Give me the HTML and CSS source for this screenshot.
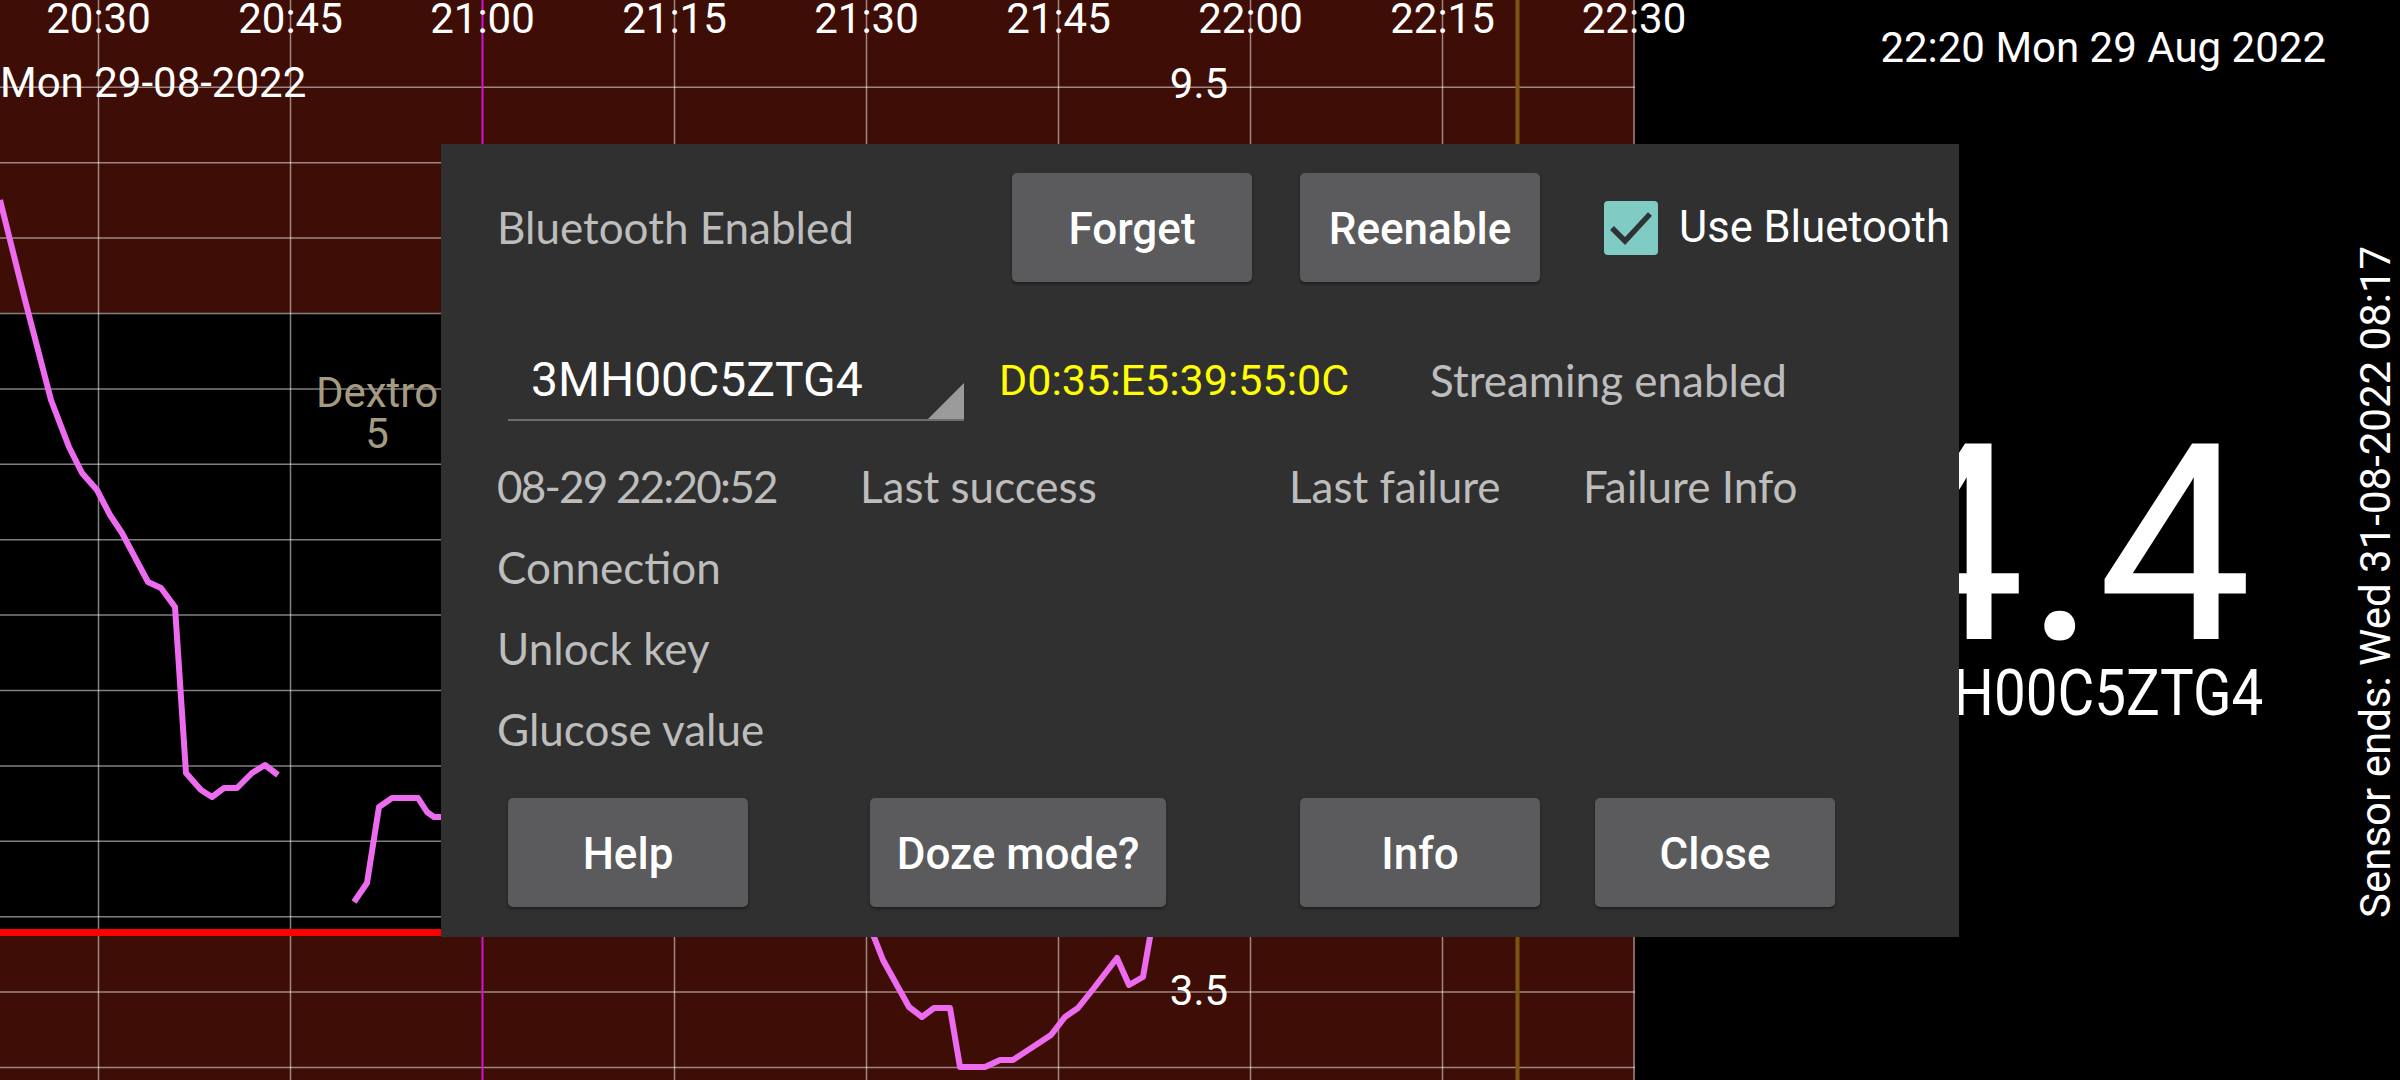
FILE: index.html
```html
<!DOCTYPE html>
<html lang="en">
<head>
<meta charset="utf-8">
<title>Sensor</title>
<link rel="stylesheet" href="styles.css">
</head>
<body>
<div class="screen">
  <svg class="chart" width="1635" height="1080" viewBox="0 0 1635 1080">
    <rect x="0" y="0" width="1635" height="1080" fill="#3e0d05"/>
    <rect x="0" y="313" width="1635" height="616" fill="#000"/>
    <g class="grid">
      <line x1="0" y1="87.3" x2="1635" y2="87.3"/>
      <line x1="0" y1="162.7" x2="1635" y2="162.7"/>
      <line x1="0" y1="238.1" x2="1635" y2="238.1"/>
      <line x1="0" y1="313.5" x2="1635" y2="313.5"/>
      <line x1="0" y1="388.9" x2="1635" y2="388.9"/>
      <line x1="0" y1="464.3" x2="1635" y2="464.3"/>
      <line x1="0" y1="539.7" x2="1635" y2="539.7"/>
      <line x1="0" y1="615.1" x2="1635" y2="615.1"/>
      <line x1="0" y1="690.5" x2="1635" y2="690.5"/>
      <line x1="0" y1="765.9" x2="1635" y2="765.9"/>
      <line x1="0" y1="841.3" x2="1635" y2="841.3"/>
      <line x1="0" y1="916.7" x2="1635" y2="916.7"/>
      <line x1="0" y1="992.1" x2="1635" y2="992.1"/>
      <line x1="0" y1="1067.5" x2="1635" y2="1067.5"/>
      <line x1="98.5" y1="0" x2="98.5" y2="1080"/>
      <line x1="290.5" y1="0" x2="290.5" y2="1080"/>
      <line x1="674.5" y1="0" x2="674.5" y2="1080"/>
      <line x1="866.5" y1="0" x2="866.5" y2="1080"/>
      <line x1="1058.5" y1="0" x2="1058.5" y2="1080"/>
      <line x1="1250.5" y1="0" x2="1250.5" y2="1080"/>
      <line x1="1442.5" y1="0" x2="1442.5" y2="1080"/>
      <line x1="1634" y1="0" x2="1634" y2="1080"/>
    </g>
    <line class="now-line" x1="482.5" y1="0" x2="482.5" y2="1080"/>
    <line class="end-line" x1="1517.5" y1="0" x2="1517.5" y2="1080"/>
    <rect x="0" y="929" width="1635" height="7" fill="#ff0000"/>
    <polyline class="trace" points="0,200 25,300 51,400 69,447 82,473 97,490 110,515 122,533 148,582 161,588 175,607 186,773 201,790 212,797 224,788 237,788 252,773 265,765 278,775"/>
    <polyline class="trace" points="354,902 367,883 379,807 392,798 418,798 427,812 434,817 460,817"/>
    <polyline class="trace" points="860,910 874,937 883,960 909,1007 922,1017 934,1008 950,1008 960,1067 985,1067 1000,1060 1013,1060 1051,1035 1065,1017 1078,1008 1094,988 1117,958 1129,985 1143,977 1150,937 1153,900"/>
    <g class="axis">
      <text x="98.5" y="33">20:30</text>
      <text x="290.5" y="33">20:45</text>
      <text x="482.5" y="33">21:00</text>
      <text x="674.5" y="33">21:15</text>
      <text x="866.5" y="33">21:30</text>
      <text x="1058.5" y="33">21:45</text>
      <text x="1250.5" y="33">22:00</text>
      <text x="1442.5" y="33">22:15</text>
      <text x="1634" y="33">22:30</text>
      <text x="1199" y="98">9.5</text>
      <text x="1199" y="1005">3.5</text>
    </g>
    <text class="day" x="0" y="97">Mon 29-08-2022</text>
    <g class="dextro">
      <text x="377" y="407">Dextro</text>
      <text x="377" y="448">5</text>
    </g>
  </svg>

  <div class="side">
    <div class="readout">
      <div class="clock">22:20 Mon 29 Aug 2022</div>
      <div class="value">4.4</div>
      <div class="serial">3MH00C5ZTG4</div>
    </div>
    <div class="sensor-col">
      <div class="sensor">Sensor ends: Wed 31-08-2022 08:17</div>
    </div>
  </div>

  <div class="dialog">
    <div class="row row-top">
      <span class="lbl lbl-state">Bluetooth Enabled</span>
      <button class="btn">Forget</button>
      <button class="btn btn-gap">Reenable</button>
      <label class="check">
        <span class="box">
          <svg width="54" height="54" viewBox="0 0 54 54"><polyline points="8,27 21,40 46,13" fill="none" stroke="#2e3434" stroke-width="5.5"/></svg>
        </span>
        <span class="check-text">Use Bluetooth</span>
      </label>
    </div>
    <div class="row row-sensor">
      <div class="spinner">
        <span class="spinner-text">3MH00C5ZTG4</span>
        <svg class="spinner-arrow" width="36" height="36" viewBox="0 0 36 36"><polygon points="0,36 36,36 36,0" fill="#9b9b9b"/></svg>
      </div>
      <span class="mac">D0:35:E5:39:55:0C</span>
      <span class="lbl">Streaming enabled</span>
    </div>
    <div class="row row-line">
      <span class="lbl col-time stamp">08-29 22:20:52</span>
      <span class="lbl col-success">Last success</span>
      <span class="lbl col-failure">Last failure</span>
      <span class="lbl">Failure Info</span>
    </div>
    <div class="row row-line"><span class="lbl col-time">Connection</span></div>
    <div class="row row-line"><span class="lbl col-time">Unlock key</span></div>
    <div class="row row-line"><span class="lbl col-time">Glucose value</span></div>
    <div class="row row-buttons">
      <button class="btn">Help</button>
      <button class="btn btn-doze">Doze mode?</button>
      <button class="btn btn-info">Info</button>
      <button class="btn btn-close">Close</button>
    </div>
  </div>
</div>
</body>
</html>
```

FILE: styles.css
```css
* { box-sizing: border-box; }

body {
  margin: 0;
  width: 2400px;
  height: 1080px;
  overflow: hidden;
  background: #000;
  font-family: Roboto, "Liberation Sans", sans-serif;
  color: #fff;
}

.screen {
  position: relative;
  display: flex;
  width: 2400px;
  height: 1080px;
}

/* chart */
.chart { flex: none; display: block; width: 1635px; height: 1080px; overflow: visible; }
.grid line { stroke: rgba(255, 255, 255, 0.5); stroke-width: 1.5; }
.now-line { stroke: #d412d4; stroke-width: 2; }
.end-line { stroke: #7d5410; stroke-width: 4; }
.trace { fill: none; stroke: #ec6bef; stroke-width: 6; stroke-linejoin: round; }
.axis text, .day {
  font-family: Roboto, "Liberation Sans", sans-serif;
  font-size: 42px;
  fill: #fff;
}
.axis text { text-anchor: middle; }
.dextro text {
  font-family: Roboto, "Liberation Sans", sans-serif;
  font-size: 42px;
  fill: #a59b82;
  text-anchor: middle;
}

/* right side readout */
.side { flex: 1; display: flex; }
.readout {
  flex: 1;
  display: flex;
  flex-direction: column;
  align-items: flex-end;
  white-space: nowrap;
}
.clock { margin-top: 23px; margin-right: 26px; font-size: 42px; line-height: 50px; }
.value { margin-top: 359px; margin-right: 100px; font-size: 275px; line-height: 226px; }
.serial {
  margin-right: 89px;
  font-size: 65px;
  line-height: 70px;
  transform: scaleX(0.87);
  transform-origin: right center;
}
.sensor-col { flex: none; width: 48px; display: flex; justify-content: center; }
.sensor {
  margin-top: 245px;
  height: 673px;
  writing-mode: vertical-rl;
  transform: rotate(180deg);
  font-size: 42px;
  line-height: 50px;
  white-space: nowrap;
}

/* dialog */
.dialog {
  position: absolute;
  left: 441px;
  top: 144px;
  width: 1518px;
  height: 793px;
  padding-top: 29px;
  background: #303030;
  display: flex;
  flex-direction: column;
}
.row { display: flex; align-items: center; flex: none; }
.row-top { height: 109px; padding-left: 56px; }
.row-sensor { height: 81px; margin-top: 58px; padding-left: 67px; align-items: stretch; }
.row-line { height: 81px; padding-left: 56px; }
.row-sensor + .row-line { margin-top: 25px; }
.row-buttons { height: 109px; margin-top: 28px; padding-left: 67px; }

.lbl {
  font-family: Lato, "Open Sans", sans-serif;
  font-size: 44px;
  line-height: 81px;
  color: #bdbdbd;
  white-space: nowrap;
}
.lbl-state { width: 515px; line-height: 109px; }
.col-time { width: 363px; }
.col-success { width: 429px; }
.col-failure { width: 294px; }
.stamp { letter-spacing: -1.8px; }

.btn {
  width: 240px;
  height: 109px;
  padding: 0;
  border: none;
  border-radius: 5px;
  background: #5b5b5d;
  box-shadow: 0 2px 3px rgba(0, 0, 0, 0.35);
  color: #fff;
  font-family: Roboto, "Liberation Sans", sans-serif;
  font-weight: 500;
  font-size: 44px;
  line-height: 112px;
}
.btn-gap { margin-left: 48px; }
.btn-doze { width: 296px; margin-left: 122px; }
.btn-info { margin-left: 134px; }
.btn-close { margin-left: 55px; }

.check { display: flex; align-items: center; margin-left: 64px; }
.box {
  width: 54px;
  height: 54px;
  border-radius: 4px;
  background: #80cbc4;
  display: flex;
}
.check-text { margin-left: 21px; font-size: 43.5px; color: #fff; white-space: nowrap; }

.spinner {
  width: 456px;
  height: 81px;
  display: flex;
  border-bottom: 2px solid #6d6d6d;
}
.spinner-text {
  flex: 1;
  padding-left: 23px;
  font-size: 48px;
  line-height: 79px;
  color: #fff;
}
.spinner-arrow { align-self: flex-end; display: block; }
.mac {
  width: 431px;
  margin-left: 35px;
  font-size: 43px;
  line-height: 81px;
  color: #ffff00;
  white-space: nowrap;
}
```
